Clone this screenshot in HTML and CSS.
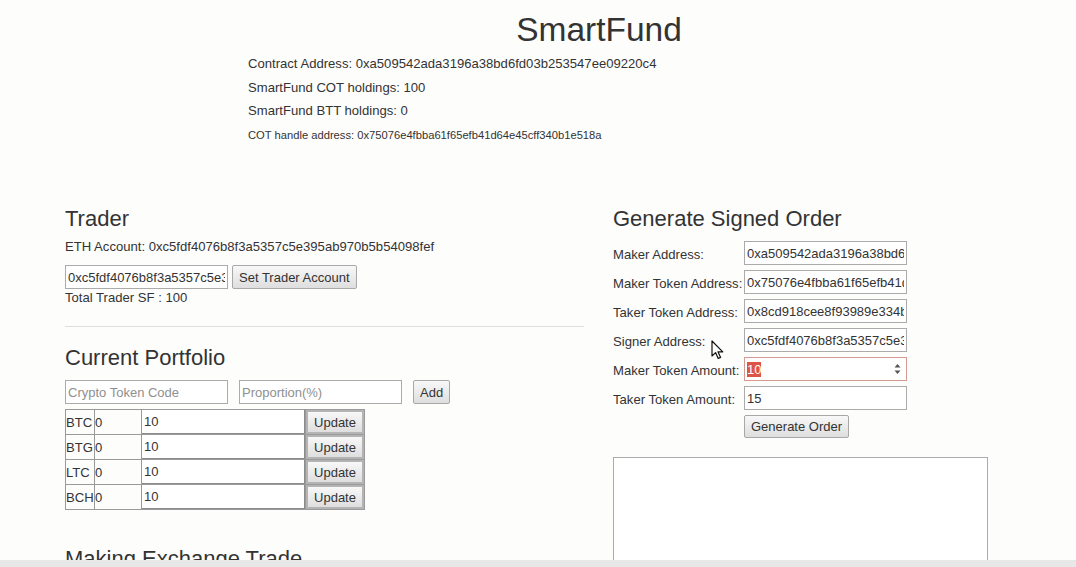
FILE: index.html
```html
<!DOCTYPE html>
<html lang="en">
<head>
    <meta charset="UTF-8">
    <meta name="viewport" content="width=device-width, initial-scale=1.0">
    <title>SmartFund</title>
    <link rel="stylesheet" href="styles.css">
</head>
<body>
    <div class="header">
        <h1>SmartFund</h1>
        <p>Contract Address: 0xa509542ada3196a38bd6fd03b253547ee09220c4</p>
        <p>SmartFund COT holdings: 100</p>
        <p>SmartFund BTT holdings: 0</p>
        <p class="small">COT handle address: 0x75076e4fbba61f65efb41d64e45cff340b1e518a</p>
    </div>

    <div class="main">
        <div class="col-left">
            <h3>Trader</h3>
            <p class="account">ETH Account: 0xc5fdf4076b8f3a5357c5e395ab970b5b54098fef</p>
            <div class="inline-row">
                <input type="text" class="field" value="0xc5fdf4076b8f3a5357c5e395ab970b5b54098fef">
                <button class="btn">Set Trader Account</button>
            </div>
            <p class="total">Total Trader SF : 100</p>

            <hr>

            <h3>Current Portfolio</h3>
            <div class="inline-row wide">
                <input type="text" class="field" placeholder="Crypto Token Code">
                <input type="text" class="field" placeholder="Proportion(%)">
                <button class="btn">Add</button>
            </div>

            <table class="portfolio">
                <tr>
                    <td class="code">BTC</td>
                    <td class="amount">0</td>
                    <td><input type="text" class="cell-input" value="10"></td>
                    <td><button class="btn cell-btn">Update</button></td>
                </tr>
                <tr>
                    <td class="code">BTG</td>
                    <td class="amount">0</td>
                    <td><input type="text" class="cell-input" value="10"></td>
                    <td><button class="btn cell-btn">Update</button></td>
                </tr>
                <tr>
                    <td class="code">LTC</td>
                    <td class="amount">0</td>
                    <td><input type="text" class="cell-input" value="10"></td>
                    <td><button class="btn cell-btn">Update</button></td>
                </tr>
                <tr>
                    <td class="code">BCH</td>
                    <td class="amount">0</td>
                    <td><input type="text" class="cell-input" value="10"></td>
                    <td><button class="btn cell-btn">Update</button></td>
                </tr>
            </table>

            <h3 class="trade-title">Making Exchange Trade</h3>
        </div>

        <div class="col-right">
            <h3>Generate Signed Order</h3>

            <div class="order-row">
                <label>Maker Address:</label>
                <input type="text" class="field" value="0xa509542ada3196a38bd6fd03b253547ee09220c4">
            </div>
            <div class="order-row">
                <label>Maker Token Address:</label>
                <input type="text" class="field" value="0x75076e4fbba61f65efb41d64e45cff340b1e518a">
            </div>
            <div class="order-row">
                <label>Taker Token Address:</label>
                <input type="text" class="field" value="0x8cd918cee8f93989e334b3c4a1d2e8f0b7a6c5d1">
            </div>
            <div class="order-row">
                <label>Signer Address:</label>
                <input type="text" class="field" value="0xc5fdf4076b8f3a5357c5e395ab970b5b54098fef">
            </div>
            <div class="order-row">
                <label>Maker Token Amount:</label>
                <div class="field number-field">
                    <span class="selected">10</span>
                    <svg class="spinner" width="7" height="12" viewBox="0 0 7 12">
                        <path d="M3.5 1 L6.5 4.5 L0.5 4.5 Z" fill="#555"/>
                        <path d="M3.5 11 L6.5 7.5 L0.5 7.5 Z" fill="#555"/>
                    </svg>
                </div>
            </div>
            <div class="order-row">
                <label>Taker Token Amount:</label>
                <input type="text" class="field" value="15">
            </div>
            <div class="order-actions">
                <button class="btn">Generate Order</button>
            </div>

            <textarea class="order-output"></textarea>
        </div>
    </div>

    <div class="statusbar"></div>

    <!-- mouse pointer captured in the screenshot -->
    <svg class="cursor" width="14" height="20" viewBox="0 0 14 20">
        <path d="M1 1 L1 16 L4.6 12.6 L7.2 18.4 L9.6 17.4 L7 11.8 L11.8 11.8 Z" fill="#fff" stroke="#111" stroke-width="1.2" stroke-linejoin="round"/>
    </svg>
</body>
</html>
```

FILE: styles.css
```css
body {
    font-family: "Liberation Sans", Arial, sans-serif;
    font-size: 13.1px;
    color: #333;
    background-color: #fdfdfc;
    margin: 0;
}

/* header */

.header {
    display: flow-root;
    margin-left: 248px;
    width: 702px;
}

.header h1 {
    text-align: center;
    font-size: 33.5px;
    font-weight: normal;
    line-height: 38px;
    margin: 11px 0 6px;
}

.header p {
    line-height: 18px;
    margin: 0 0 5.5px;
}

.header p.small {
    font-size: 11.2px;
    margin: 0;
}

/* columns */

.main {
    display: flex;
    margin-top: 63.5px;
    padding-left: 65px;
}

.col-left {
    width: 519px;
}

.col-right {
    margin-left: 29px;
    width: 400px;
}

h3 {
    font-size: 22px;
    font-weight: normal;
    line-height: 24px;
    margin: 0 0 10px;
}

.account {
    line-height: 18px;
    margin: -3px 0 9px;
}

.total {
    line-height: 18px;
    margin: 0;
}

hr {
    border: none;
    border-top: 1px solid #dedede;
    margin: 19px 0 19px;
}

/* form controls */

.field {
    width: 163px;
    height: 24px;
    box-sizing: border-box;
    border: 1px solid #ababab;
    background-color: #fff;
    font-family: "Liberation Sans", Arial, sans-serif;
    font-size: 13px;
    color: #333;
    padding: 1px 2px;
    margin: 0;
}

.field::placeholder {
    color: #8f8f8f;
}

.btn {
    height: 24px;
    padding: 0 6px;
    border: 1px solid #a8a8a8;
    border-radius: 2px;
    background: linear-gradient(#f8f8f8, #dedede);
    font-family: "Liberation Sans", Arial, sans-serif;
    font-size: 13px;
    color: #333;
    cursor: pointer;
}

.inline-row {
    display: flex;
    gap: 4px;
    align-items: center;
}

.inline-row.wide {
    gap: 11px;
    margin-bottom: 5px;
}

/* portfolio table */

.portfolio {
    border-collapse: collapse;
    border: 1px solid #4d4d4d;
}

.portfolio td {
    border: 1px solid #9a9a9a;
    padding: 0;
    height: 24px;
}

.portfolio td.code {
    width: 28px;
}

.portfolio td.amount {
    width: 46px;
}

.cell-input {
    display: block;
    width: 163px;
    height: 24px;
    box-sizing: border-box;
    border: 1px solid #8c8c8c;
    border-left: none;
    border-top: none;
    font-family: "Liberation Sans", Arial, sans-serif;
    font-size: 13px;
    color: #333;
    padding: 1px 2px;
    margin: 0;
}

.cell-btn {
    display: block;
    width: 58px;
    height: 24px;
    border: 2px solid #b4b4b4;
    border-radius: 0;
    padding: 0;
}

.trade-title {
    margin-top: 37px;
}

/* signed order form */

.order-row {
    display: flex;
    align-items: center;
    margin-bottom: 5px;
}

.order-row label {
    width: 131px;
    padding-top: 3px;
    white-space: nowrap;
}

.number-field {
    display: flex;
    align-items: center;
    justify-content: space-between;
    border-color: #d49a91;
    padding: 0 5px 0 2px;
}

.number-field .selected {
    background-color: #dc5445;
    color: #fff;
    line-height: 15px;
}

.order-actions {
    padding-left: 131px;
    margin-top: 2px;
}

.order-actions .btn {
    height: 23px;
}

.order-output {
    display: block;
    width: 375px;
    height: 150px;
    box-sizing: border-box;
    margin-top: 19px;
    border: 1px solid #ababab;
    background-color: #fff;
    resize: none;
}

.statusbar {
    position: fixed;
    left: 0;
    right: 0;
    bottom: 0;
    height: 7px;
    background-color: #e8e8e8;
}

.cursor {
    position: absolute;
    left: 711px;
    top: 340px;
}
```
